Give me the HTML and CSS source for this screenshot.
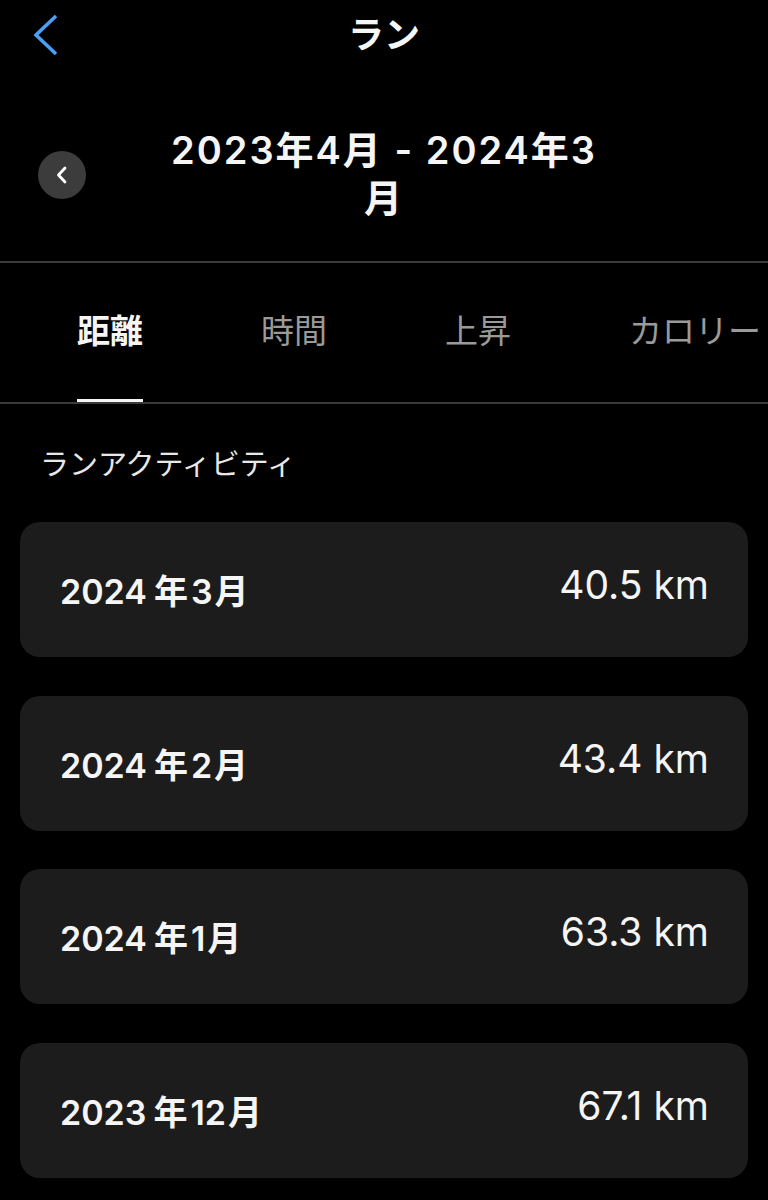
FILE: index.html
```html
<!DOCTYPE html>
<html lang="ja">
<head>
<meta charset="utf-8">
<title>ラン</title>
<link rel="stylesheet" href="styles.css">
</head>
<body>
<div class="app">
  <header class="navbar">
    <div class="nav-left">
      <svg class="back-icon" width="26" height="42" viewBox="0 0 26 42" aria-hidden="true">
        <path d="M23 2 L3 21 L23 40" fill="none" stroke="#4ba0f5" stroke-width="3.6" stroke-linecap="butt" stroke-linejoin="miter"/>
      </svg>
    </div>
    <h1 class="nav-title">ラン</h1>
    <div class="nav-right"></div>
  </header>

  <section class="period">
    <div class="period-left">
      <button class="circle-btn" aria-label="前へ">
        <svg width="14" height="18" viewBox="0 0 14 18" aria-hidden="true">
          <path d="M10 2 L3.5 9 L10 16" fill="none" stroke="#ffffff" stroke-width="2.8" stroke-linecap="round" stroke-linejoin="round"/>
        </svg>
      </button>
    </div>
    <div class="period-title">2023年4月 - 2024年3月</div>
    <div class="period-right"></div>
  </section>

  <nav class="tabs">
    <div class="tab active">距離</div>
    <div class="tab">時間</div>
    <div class="tab">上昇</div>
    <div class="tab">カロリー</div>
  </nav>

  <h2 class="section-label">ランアクティビティ</h2>

  <ul class="cards">
    <li class="card"><span class="card-label">2024<span class="yr">年</span>3<span class="mo">月</span></span><span class="card-value">40.5 km</span></li>
    <li class="card"><span class="card-label">2024<span class="yr">年</span>2<span class="mo">月</span></span><span class="card-value">43.4 km</span></li>
    <li class="card"><span class="card-label">2024<span class="yr">年</span>1<span class="mo">月</span></span><span class="card-value">63.3 km</span></li>
    <li class="card"><span class="card-label">2023<span class="yr">年</span>12<span class="mo">月</span></span><span class="card-value">67.1 km</span></li>
  </ul>
</div>
</body>
</html>
```

FILE: styles.css
```css
* {
  box-sizing: border-box;
}

html, body {
  margin: 0;
  padding: 0;
  background: #000000;
}

body {
  font-family: Inter, "Noto Sans CJK JP", sans-serif;
  color: #f5f5f5;
  width: 768px;
  height: 1200px;
  overflow: hidden;
}

.navbar {
  display: grid;
  grid-template-columns: 1fr auto 1fr;
  align-items: center;
  height: 70px;
}

.nav-left {
  display: flex;
  align-items: center;
  padding-left: 33px;
}

.back-icon {
  display: block;
}

.nav-title {
  margin: 0;
  font-size: 36px;
  font-weight: 700;
  line-height: 44px;
  color: #f5f5f5;
}

.period {
  display: grid;
  grid-template-columns: 1fr 440px 1fr;
  align-items: center;
  padding: 56px 0 39px;
  border-bottom: 2px solid #3a3a3a;
}

.period-left {
  display: flex;
  align-items: center;
  padding-left: 38px;
}

.circle-btn {
  width: 48px;
  height: 48px;
  border: none;
  border-radius: 50%;
  background: #3c3c3c;
  display: flex;
  align-items: center;
  justify-content: center;
  padding: 0;
  margin-top: 1px;
}

.circle-btn svg {
  display: block;
}

.period-title {
  text-align: center;
  font-size: 38px;
  font-weight: 600;
  line-height: 48px;
  letter-spacing: 2px;
  color: #f5f5f5;
}

.tabs {
  display: flex;
  gap: 118px;
  padding-left: 77px;
  white-space: nowrap;
  overflow: hidden;
  border-bottom: 2px solid #3a3a3a;
}

.tab {
  flex: none;
  font-size: 33px;
  line-height: 36px;
  padding: 50px 0 50px;
  border-bottom: 3px solid transparent;
  color: #9a9a9a;
  font-weight: 400;
}

.tab.active {
  color: #f5f5f5;
  font-weight: 700;
  border-bottom-color: #f5f5f5;
}

.section-label {
  margin: 41px 0 0;
  padding-left: 40px;
  font-size: 29px;
  line-height: 40px;
  font-weight: 400;
  color: #e8e8e8;
}

.cards {
  list-style: none;
  margin: 37px 0 0;
  padding: 0 20px;
  display: flex;
  flex-direction: column;
  gap: 38.7px;
}

.card {
  height: 135px;
  border-radius: 20px;
  background: #1c1c1c;
  display: flex;
  align-items: center;
  justify-content: space-between;
  padding: 0 39px 0 40px;
}

.card-label {
  font-size: 34px;
  font-weight: 600;
  color: #f5f5f5;
}

.card-label .yr {
  margin: 0 3px 0 7px;
}

.card-label .mo {
  margin-left: 2px;
}

.card-value {
  font-size: 39px;
  font-weight: 400;
  color: #f5f5f5;
  margin-bottom: 10px;
}
```
